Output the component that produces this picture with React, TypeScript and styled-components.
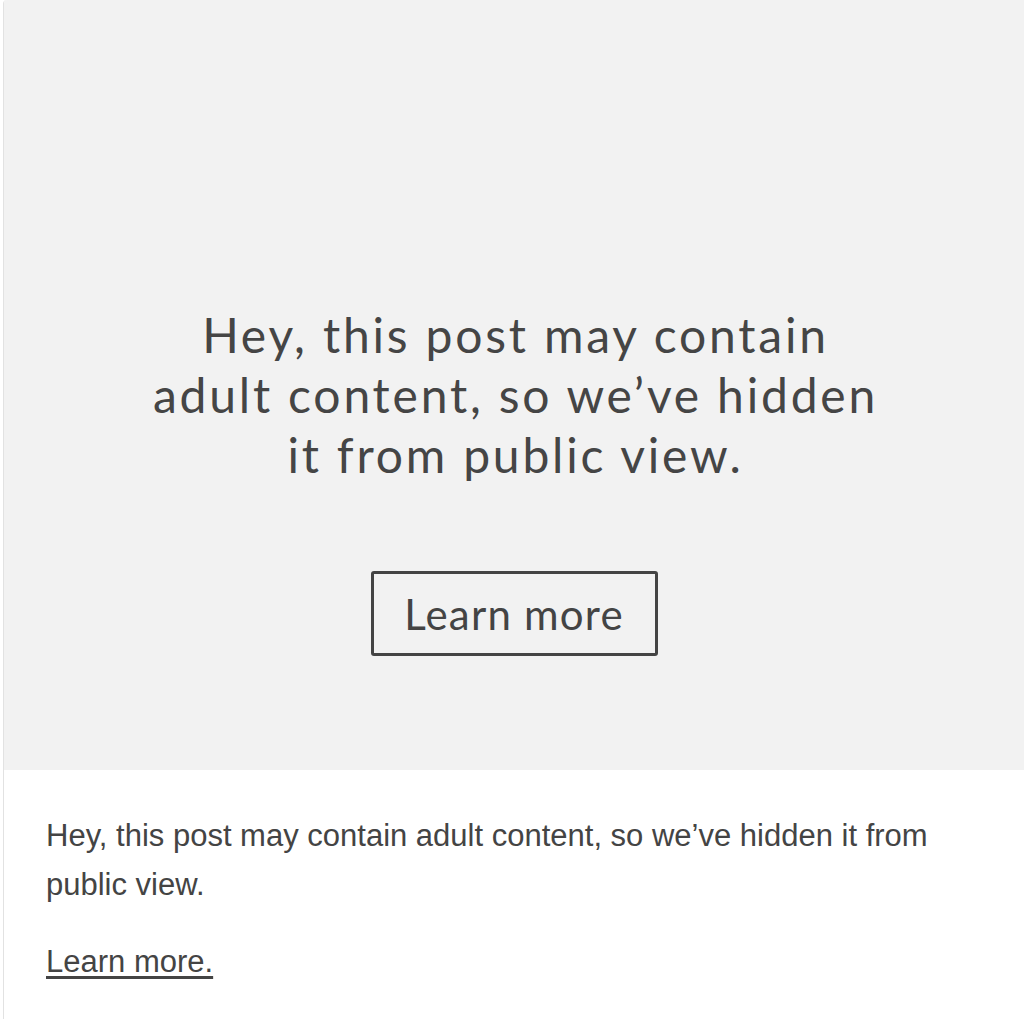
import * as React from 'react'
import styled, { createGlobalStyle } from 'styled-components'

const GlobalStyle = createGlobalStyle`
  html, body {
    margin: 0;
    padding: 0;
    background: #ffffff;
  }
`

function App() {
  return (
    <>
      <GlobalStyle />
      <Card>
        <Cover>
          <CoverText>
            Hey, this post may contain
            <br />
            adult content, so we’ve hidden
            <br />
            it from public view.
          </CoverText>
          <OutlineButton type="button">Learn more</OutlineButton>
        </Cover>
        <Body>
          <Note>
            Hey, this post may contain adult content, so we’ve hidden it from
            public view.
          </Note>
          <NoteLink href="#">Learn more.</NoteLink>
        </Body>
      </Card>
    </>
  )
}

const Card = styled.div`
  margin-left: 3px;
  width: 1040px;
  height: 1019px;
  border-left: 1px solid #e2e2e2;
  border-top-left-radius: 4px;
  overflow: hidden;
  display: flex;
  flex-direction: column;
  background: #ffffff;
`

const Cover = styled.div`
  height: 770px;
  flex-shrink: 0;
  background: #f2f2f2;
  display: flex;
  flex-direction: column;
  align-items: center;
  justify-content: flex-start;
  padding-top: 305px;
  box-sizing: border-box;
  padding-right: 20px;
`

const CoverText = styled.p`
  margin: 0;
  font-family: Lato, 'Noto Sans', sans-serif;
  font-size: 48px;
  line-height: 60px;
  color: #454545;
  text-align: center;
  letter-spacing: 2.8px;
  padding-left: 3px;
`

const OutlineButton = styled.button`
  margin-top: 86px;
  width: 287px;
  height: 85px;
  border: 3px solid #444444;
  border-radius: 3px;
  background: transparent;
  font-family: Lato, 'Noto Sans', sans-serif;
  font-size: 42px;
  color: #444444;
  letter-spacing: 1.2px;
  cursor: pointer;
`

const Body = styled.div`
  padding: 41px 0 0 42px;
`

const Note = styled.p`
  margin: 0;
  width: 900px;
  font-family: 'Liberation Sans', Arial, sans-serif;
  font-size: 31px;
  line-height: 49px;
  color: #444444;
`

const NoteLink = styled.a`
  display: inline-block;
  margin-top: 28px;
  font-family: 'Liberation Sans', Arial, sans-serif;
  font-size: 31px;
  line-height: 49px;
  color: #444444;
  text-decoration: underline;
  text-underline-offset: 4px;
`

export default App
